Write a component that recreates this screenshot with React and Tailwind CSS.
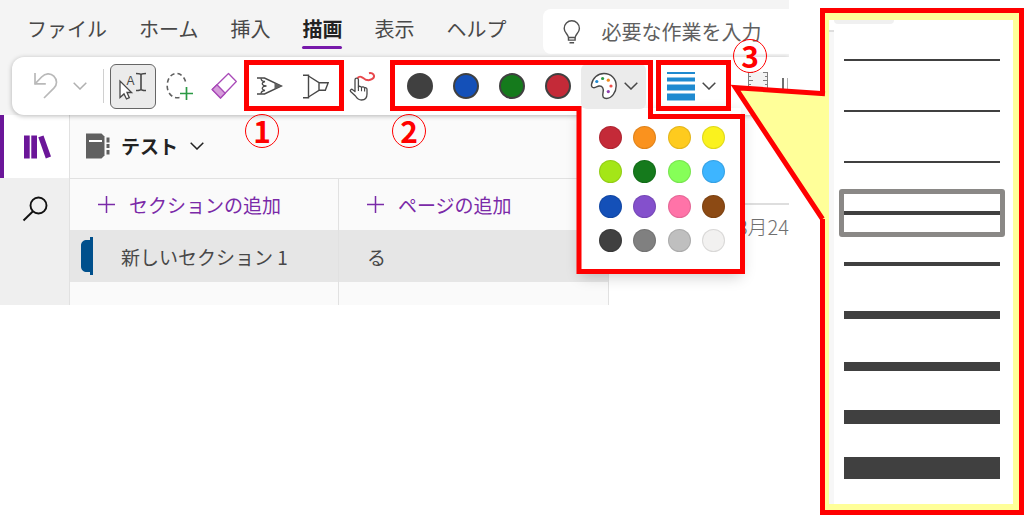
import React from "react";

const TABS = ["ファイル", "ホーム", "挿入", "描画", "表示", "ヘルプ"];

const PENS = [
  { name: "黒", color: "bg-[#404040]" },
  { name: "青", color: "bg-[#1450b8]" },
  { name: "緑", color: "bg-[#157a1c]" },
  { name: "赤", color: "bg-[#c42a38]" },
];

const SWATCHES = [
  { name: "赤", color: "bg-[#c42a38]" },
  { name: "オレンジ", color: "bg-[#fa921e]" },
  { name: "ゴールド", color: "bg-[#fecb1e]" },
  { name: "黄", color: "bg-[#faf21e]" },
  { name: "黄緑", color: "bg-[#a4e617]" },
  { name: "緑", color: "bg-[#157a1c]" },
  { name: "ライム", color: "bg-[#86ff58]" },
  { name: "水色", color: "bg-[#3db5ff]" },
  { name: "青", color: "bg-[#1450b8]" },
  { name: "紫", color: "bg-[#8450cc]" },
  { name: "ピンク", color: "bg-[#ff73a8]" },
  { name: "茶", color: "bg-[#8c4a14]" },
  { name: "黒", color: "bg-[#404040]" },
  { name: "濃い灰色", color: "bg-[#808080]" },
  { name: "灰色", color: "bg-[#bfbfbf]" },
  { name: "白", color: "bg-[#f2f1f0]" },
];

const THICKNESSES = ["h-[2px]", "h-[2px]", "h-[2px]", "h-[4px]", "h-[4px]", "h-[8px]", "h-[9px]", "h-[14px]", "h-[22px]"];
const SELECTED_THICKNESS = 3;

function Chevron({ className }) {
  return (
    <svg className={className} width="14" height="8" viewBox="0 0 14 8" fill="none" stroke="currentColor" strokeWidth="1.5">
      <path d="M.7.7 7 7 13.3.7" />
    </svg>
  );
}

function Plus() {
  return (
    <svg width="17" height="17" viewBox="0 0 17 17" stroke="#7a2aa8" strokeWidth="1.5">
      <path d="M8.5 0v17M0 8.5h17" />
    </svg>
  );
}

function Tool({ label, className, children }) {
  return (
    <button type="button" aria-label={label} className={`flex shrink-0 items-center justify-center ${className}`}>
      {children}
    </button>
  );
}

function MenuBar() {
  return (
    <header className="flex h-[57px] items-start">
      <nav className="flex shrink-0 gap-8 pl-[27px]">
        {TABS.map((tab) => (
          <button
            key={tab}
            type="button"
            className={
              tab === "描画"
                ? "relative flex h-[58px] items-center text-xl leading-none font-bold text-[#222]"
                : "flex h-[58px] items-center text-xl leading-none text-[#484848]"
            }
          >
            {tab}
            {tab === "描画" && <span className="absolute inset-x-0 top-[46px] h-[3px] rounded-full bg-[#7719aa]" />}
          </button>
        ))}
      </nav>
      <label className="mt-[9px] ml-[37px] flex h-[45px] min-w-0 flex-1 items-center rounded-l-lg bg-white pl-5">
        <svg className="shrink-0" width="18" height="24" viewBox="0 0 18 24" fill="none" stroke="#505050" strokeWidth="1.4">
          <path d="M5.5 17.5C5.2 14.2 1.2 12.8 1.2 8.4a7.6 7.6 0 0 1 15.2 0c0 4.4-4 5.8-4.3 9.1z" />
          <path d="M5.5 17.5v2.6h6.6v-2.6M6.5 22.8h4.6" />
        </svg>
        <input
          type="text"
          aria-label="操作アシスト"
          placeholder="必要な作業を入力"
          className="ml-5 w-full min-w-0 bg-transparent text-xl leading-none outline-none placeholder:text-[#606060]"
        />
      </label>
    </header>
  );
}

function ColorPalette() {
  return (
    <div className="absolute top-[44px] left-0 w-40 bg-white pt-[13px] pb-3 pl-3 shadow-[0_6px_14px_rgba(0,0,0,0.22)]">
      <div className="grid h-[137px] w-[138px] grid-cols-4 grid-rows-4 place-items-center">
        {SWATCHES.map((s, i) => (
          <button
            key={i}
            type="button"
            aria-label={s.name}
            className={`size-[23px] rounded-full border border-black/10 ${s.color}`}
          />
        ))}
      </div>
    </div>
  );
}

function Ribbon() {
  return (
    <div className="relative z-10 ml-3 flex h-[58px] items-center rounded-l-xl bg-white pl-5 text-[#484848] shadow-[0_1px_5px_rgba(0,0,0,0.28)]">
      <Tool label="元に戻す" className="w-[26px]">
        <svg width="26" height="28" viewBox="0 0 26 28" fill="none" stroke="#b9b9b9" strokeWidth="1.7">
          <path d="M3 1v10.8h10.8" />
          <path d="M3 11.8 9.6 5C13.4 1.200 18.400.8 21.800 4.200c3.700 3.700 3.500 8.600.1 12L12 26" />
        </svg>
      </Tool>
      <Tool label="元に戻す履歴" className="ml-[15px] w-[14px] text-[#b0b0b0]">
        <Chevron />
      </Tool>
      <span className="ml-4 h-[34px] w-px shrink-0 bg-[#d0d0d0]" />
      <Tool label="オブジェクトの選択またはテキストの入力" className="ml-1.5 h-[45px] w-[46px] rounded-md border border-[#666] bg-[#ebebeb]">
        <svg width="30" height="28" viewBox="0 0 30 28" fill="none" stroke="#484848" strokeWidth="1.3">
          <path d="M2 9v16.500l4-3.600 2.500 5.100 2.800-1.300L9 20.500h4.600z" fill="#fff" />
          <text x="8.500" y="12.500" fontSize="12" fill="#484848" stroke="none" fontFamily="Liberation Sans, sans-serif">
            A
          </text>
          <path d="M18 1.500c3.500 0 5 .4 5 1.500 0-1.100 1.500-1.500 5-1.500M18 18.500c3.500 0 5-.4 5-1.500 0 1.100 1.500 1.500 5 1.500M23 2.500V18" strokeWidth="1.6" />
        </svg>
      </Tool>
      <Tool label="なげなわ選択" className="ml-2.5 w-7">
        <svg width="28" height="30" viewBox="0 0 28 30" fill="none">
          <path d="M13.500 26.500C7.500 28 1.200 23 1.200 15S5.500 2.500 10.500 2.500s9 4.500 9.500 11" stroke="#606060" strokeWidth="1.6" strokeDasharray="4.500 3" />
          <path d="M20.500 16v13M14 22.500h13" stroke="#2b9a45" strokeWidth="1.7" />
        </svg>
      </Tool>
      <Tool label="消しゴム" className="ml-[17px] w-[26px]">
        <svg width="26" height="28" viewBox="0 0 26 28" fill="none" stroke="#a94bb8" strokeWidth="1.3" strokeLinejoin="round">
          <path d="M17.500 1.500 25.300 9.500 9.500 26 1.200 17.500z" fill="#fff" />
          <path d="M6 12.800 14.200 21.200 9.500 26 1.200 17.500z" fill="#d69ddb" />
        </svg>
      </Tool>
      <Tool label="ペン" className="ml-5 w-[26px]">
        <svg width="26" height="18" viewBox="0 0 26 18" fill="none" stroke="#484848" strokeWidth="1.4">
          <path d="M0 1h7.500L24.500 9 7.500 17H0" />
          <path d="M4 1.200C4.200 3.400 5.500 4.500 8 4.500 5.500 5 4.800 6.500 5.500 7.500 6 8.500 7.500 9 9.500 9 7.500 9 6 9.500 5.500 10.500c-.7 1 0 2.500 2.500 3-2.500 0-3.800 1.100-4 3.300" strokeWidth="1.300" />
          <path d="M17.500 6v6L25 9z" fill="#606060" stroke="none" />
        </svg>
      </Tool>
      <Tool label="蛍光ペン" className="ml-5 w-[26px]">
        <svg width="26" height="25" viewBox="0 0 26 25" fill="none" stroke="#484848" strokeWidth="1.400">
          <path d="M0 1.200h5.500v22.600H0" />
          <path d="M5.500 2 16 8.700v7.600L5.500 23M16 8.700h9.200l-2.900 7.600H16" />
        </svg>
      </Tool>
      <Tool label="タッチして描画する" className="ml-5 w-[26px]">
        <svg width="26" height="30" viewBox="0 0 26 30" fill="none" strokeLinejoin="round">
          <path
            d="M6 20.500V8.800a1.700 1.700 0 0 1 3.400 0v7.400c.3-1.400 3.100-1.200 3.100.5.300-1.300 3.100-1 3.100.7.400-1.100 2.400-.7 2.400 1V23c0 3.500-2 6-5.500 6-3.300 0-4.500-1.500-6-4L1.600 20.600c-1-1.600.8-3 2.100-1.900z"
            fill="#fff"
            stroke="#484848"
            strokeWidth="1.3"
          />
          <path d="M9.400 16v4M12.500 17v3.200M15.600 18v2.600" stroke="#484848" strokeWidth="1.100" />
          <path d="M8.500 7C12 3.500 14 7.500 17 8.700c4.500 1.500 8.500-1.500 8-4C24.600 2.500 22 1.700 20 2.200" stroke="#e8474c" strokeWidth="2" />
        </svg>
      </Tool>
      <div className="ml-8 flex shrink-0 gap-5">
        {PENS.map((pen) => (
          <button
            key={pen.name}
            type="button"
            aria-label={pen.name}
            className={`size-[26px] rounded-full border-2 border-[#404040] ${pen.color}`}
          />
        ))}
      </div>
      <div className="relative ml-2.5 shrink-0">
        <button
          type="button"
          aria-label="色"
          aria-expanded="true"
          className="relative z-10 flex h-[45px] w-[65px] items-center justify-center gap-[7px] rounded-md bg-[#ebebeb]"
        >
          <svg width="27" height="28" viewBox="0 0 27 28" fill="none">
            <path
              d="M1.500 12.500C2.500 6 8 1.500 14 1.500c7 0 12.200 5.300 12.200 12.200 0 6.800-4.700 12.800-9.700 12.800-3.200 0-4.500-2-3.500-5.500 1.200-4-.5-7.500-4-7-1.500.2-3 1.700-5 1.700-1.800 0-2.800-1.300-2.500-3.200z"
              fill="#fff"
              stroke="#484848"
              strokeWidth="1.4"
            />
            <circle cx="6.800" cy="9.500" r="1.600" fill="#1f8ad0" />
            <circle cx="12.600" cy="6.500" r="1.600" fill="#2b9a45" />
            <circle cx="18.300" cy="8.200" r="1.600" fill="#f08a1c" />
            <circle cx="21" cy="14" r="1.600" fill="#f0504c" />
            <circle cx="18.300" cy="19.600" r="1.600" fill="#9040b0" />
          </svg>
          <Chevron />
        </button>
        <ColorPalette />
      </div>
      <Tool label="太さ" className="ml-[21px] gap-[7px]">
        <svg width="28" height="30" viewBox="0 0 28 30" fill="#1f8ad0">
          <path d="M0 1h28v2H0zM0 6.500h28v4H0zM0 13.500h28v6H0zM0 22.500h28v7H0z" />
        </svg>
        <Chevron />
      </Tool>
      <Tool label="ルーラー" className="ml-8 w-5">
        <svg width="20" height="28" viewBox="0 0 20 28" fill="none" stroke="#808080" strokeWidth="1">
          <path d="M0 0h20v28H0z" fill="#f3f3f3" stroke="none" />
          <path d="M.5 0v28M19.500 0v28M0 .5h5M0 4.500h3M0 8.500h5M0 12.500h3M0 16.500h5M0 20.500h3M20 .5h-5M20 4.500h-3M20 8.500h-5M20 12.500h-3M20 16.500h-5M20 20.500h-3" />
        </svg>
      </Tool>
      <Tool label="図形" className="ml-3.5 w-1.5">
        <svg width="6" height="16" viewBox="0 0 6 16" fill="none" stroke="#707070">
          <path d="M1 0v16" strokeWidth="2" />
          <path d="M5.500 0v16" stroke="#b0b0b0" />
        </svg>
      </Tool>
    </div>
  );
}

function Workspace() {
  return (
    <div className="flex h-[190px] text-[19px] leading-none text-[#484848]">
      <div className="w-[70px] shrink-0 border-r border-[#e1e1e1] bg-[#efefef]">
        <button type="button" aria-label="ノートブック" className="flex h-[63px] w-full items-center border-l-4 border-[#6b1699] bg-white pl-5">
          <svg width="28" height="24" viewBox="0 0 28 24" fill="#6b1699">
            <path d="M0 .5h5.700V23.500H0zM7.300.5H13V23.500H7.300zM14.300 2.300 19.500.5 27 21.500 21.800 23.500z" />
          </svg>
        </button>
        <button type="button" aria-label="検索" className="flex h-[62px] w-full items-center justify-center">
          <svg width="26" height="26" viewBox="0 0 26 26" fill="none" stroke="#111" strokeWidth="1.900">
            <circle cx="16.500" cy="9.500" r="8" />
            <path d="M11 15.300 1.500 24.500" />
          </svg>
        </button>
      </div>
      <div className="w-[539px] shrink-0 border-r border-[#e1e1e1] bg-[#fafafa]">
        <button type="button" className="flex h-16 w-full items-center border-b border-[#e1e1e1] pb-0.5 pl-4 font-bold text-[#222]">
          <svg width="24" height="26" viewBox="0 0 24 26" fill="#606060">
            <path d="M0 .5h15.500l3 3v19l-3 3H0z" />
            <path d="M3 7h13v2H3z" fill="#fff" />
            <path d="M20.500 4.500h3v5h-3zM20.500 11h3v4h-3zM20.500 17h3v4.500h-3z" />
          </svg>
          <span className="ml-[11px]">テスト</span>
          <Chevron className="ml-3" />
        </button>
        <div className="grid h-[126px] grid-cols-2 divide-x divide-[#e1e1e1]">
          <div>
            <button type="button" className="flex h-[51px] w-full items-center gap-3.5 pl-7 text-[#7a2aa8]">
              <Plus />
              セクションの追加
            </button>
            <button type="button" className="flex h-[52px] w-full items-center gap-7 bg-[#e6e6e6] pl-[11px]">
              <svg width="12" height="38" viewBox="0 0 12 38" fill="#00508c">
                <path d="M12 0H9v3H6C2.500 3 0 5 0 8.500v21C0 33 2.500 35 6 35h3v3h3z" />
              </svg>
              新しいセクション 1
            </button>
          </div>
          <div>
            <button type="button" className="flex h-[51px] w-full items-center gap-3.5 pl-7 text-[#7a2aa8]">
              <Plus />
              ページの追加
            </button>
            <button type="button" className="flex h-[52px] w-full items-center bg-[#e6e6e6] pl-7">
              る
            </button>
          </div>
        </div>
      </div>
      <div className="min-w-0 flex-1 overflow-hidden bg-white pt-[88px]">
        <div className="ml-5 border-t-2 border-[#dedede] pt-3 text-right text-xl leading-none font-light whitespace-nowrap text-[#707070]">
          3月24
        </div>
      </div>
    </div>
  );
}

function Marker({ className, children }) {
  return (
    <span
      className={`absolute z-30 flex size-[34px] items-center justify-center rounded-full border border-[#ff0000] pb-[3px] text-[30px] leading-none font-bold text-[#ff0000] ${className}`}
    >
      {children}
    </span>
  );
}

function ThicknessCallout() {
  return (
    <aside className="relative z-20 mt-2 h-fit w-[204px] shrink-0 border-[5px] border-[#ff0000] bg-[#ffff99] px-1 pt-[7px] pb-1.5">
      <svg className="absolute top-[70px] -left-[96px]" width="100" height="146" viewBox="0 0 100 146" fill="none">
        <path d="M101 10.500 7 4.500 93.500 136H101z" fill="#ffff99" />
        <path d="M96 10.700 6.500 4.700 93.500 136" stroke="#ff0000" strokeWidth="5" />
      </svg>
      <div className="relative w-[184px] bg-white">
        <div className="absolute top-0 left-[5px] h-1 w-[60px] rounded-b bg-[#f0f0f0]" />
        <div className="absolute top-[10px] bottom-0 left-0 w-[5px] border-t-2 border-[#dedede] bg-[#f7f7f7]" />
        <div className="flex flex-col gap-[3px] pt-4 pr-2 pb-3 pl-2.5">
          {THICKNESSES.map((t, i) => (
            <button
              key={i}
              type="button"
              aria-label={`太さ ${i + 1}`}
              aria-pressed={i === SELECTED_THICKNESS}
              className={
                i === SELECTED_THICKNESS
                  ? "flex h-12 items-center rounded-[3px] border-[5px] border-[#8a8886]"
                  : "flex h-12 items-center border-[5px] border-transparent"
              }
            >
              <span className={`w-full bg-[#404040] ${t}`} />
            </button>
          ))}
        </div>
      </div>
    </aside>
  );
}

export default function App() {
  return (
    <div className="relative flex items-start gap-[31px] bg-white font-['Noto_Sans_CJK_JP','Noto_Sans',sans-serif]">
      <main className="relative min-w-0 flex-1">
        <div className="overflow-hidden bg-[#f4f4f4]">
          <MenuBar />
          <Ribbon />
          <Workspace />
        </div>
        <div className="pointer-events-none absolute top-[60px] left-[244px] z-20 h-[51px] w-[100px] border-[5px] border-[#ff0000]" />
        <div className="pointer-events-none absolute top-[60px] left-[656px] z-20 h-[51px] w-[75px] border-[5px] border-[#ff0000]" />
        <svg className="pointer-events-none absolute top-[60px] left-[390px] z-20" width="355" height="214" viewBox="0 0 355 214" fill="none">
          <path d="M2.500 2.500h258v54h92v155h-163.500V48.500H2.500z" stroke="#ff0000" strokeWidth="5" />
        </svg>
        <Marker className="top-[114px] left-[245px]">1</Marker>
        <Marker className="top-[114px] left-[392px]">2</Marker>
        <Marker className="top-[39px] left-[733px]">3</Marker>
      </main>
      <ThicknessCallout />
    </div>
  );
}
